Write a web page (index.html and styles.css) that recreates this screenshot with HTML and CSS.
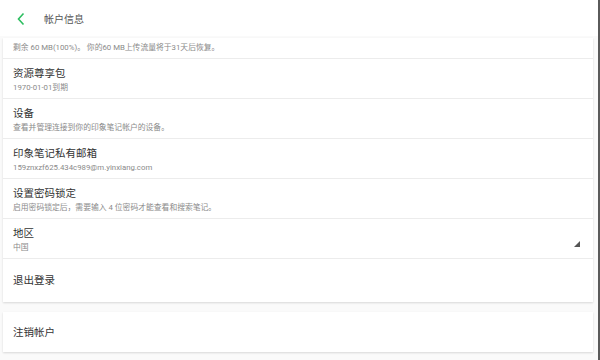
FILE: index.html
```html
<!DOCTYPE html>
<html lang="zh-CN">

    <head>
        <meta charset="UTF-8">
        <meta name="viewport" content="width=device-width, initial-scale=1.0">
        <title>帐户信息</title>
        <link rel="stylesheet" href="styles.css">
    </head>

    <body>
        <div class="screen">
            <header class="topbar">
                <svg class="back" width="10" height="14" viewBox="0 0 10 14">
                    <path d="M7.5 1.5 L2.5 7 L7.5 12.5" fill="none" stroke="#2dbe60" stroke-width="1.6" />
                </svg>
                <span class="topbar-title">帐户信息</span>
            </header>

            <main class="content">
                <section class="card">
                    <div class="row row-quota">
                        <span class="sub">剩余 60 MB(100%)。 你的60 MB上传流量将于31天后恢复。</span>
                    </div>
                    <div class="row">
                        <span class="title">资源尊享包</span>
                        <span class="sub">1970-01-01到期</span>
                    </div>
                    <div class="row">
                        <span class="title">设备</span>
                        <span class="sub">查看并管理连接到你的印象笔记帐户的设备。</span>
                    </div>
                    <div class="row">
                        <span class="title">印象笔记私有邮箱</span>
                        <span class="sub">159znxzf625.434c989@m.yinxiang.com</span>
                    </div>
                    <div class="row">
                        <span class="title">设置密码锁定</span>
                        <span class="sub">启用密码锁定后，需要输入 4 位密码才能查看和搜索笔记。</span>
                    </div>
                    <div class="row row-select">
                        <div class="row-text">
                            <span class="title">地区</span>
                            <span class="sub">中国</span>
                        </div>
                        <span class="dropdown"></span>
                    </div>
                    <div class="row row-single">
                        <span class="title">退出登录</span>
                    </div>
                </section>

                <section class="card">
                    <div class="row row-single">
                        <span class="title">注销帐户</span>
                    </div>
                </section>
            </main>
        </div>
    </body>

</html>
```

FILE: styles.css
```css
html,
body {
    margin: 0;
    padding: 0;
}

* {
    box-sizing: border-box;
}

body {
    font-family: Roboto, "Noto Sans CJK SC", sans-serif;
    background-color: #fafafa;
    width: 600px;
    height: 360px;
    overflow: hidden;
}

.screen {
    height: 360px;
    border-right: 2px solid #5a5a5a;
}

.topbar {
    height: 36px;
    background-color: #fff;
    display: flex;
    align-items: center;
    padding-left: 16px;
}

.back {
    margin-top: 2px;
}

.topbar-title {
    margin-left: 18px;
    font-size: 10px;
    color: #555;
    margin-top: 1px;
}

.content {
    padding: 2px 5px 0 3px;
    display: flex;
    flex-direction: column;
    gap: 10px;
}

.card {
    background-color: #fff;
    box-shadow: 0 1px 2px rgba(0, 0, 0, 0.14);
}

.row {
    height: 40px;
    padding: 3px 10px 0;
    display: flex;
    flex-direction: column;
    justify-content: center;
    gap: 3px;
    border-bottom: 1px solid #ececec;
}

.row:last-child {
    border-bottom: none;
}

.row-quota {
    height: 21px;
    padding-top: 0;
}

.row-single {
    height: 43px;
    padding-top: 0;
}

.card:last-child .row-single {
    height: 40px;
}

.row-select {
    flex-direction: row;
    align-items: center;
    justify-content: space-between;
}

.row-text {
    display: flex;
    flex-direction: column;
    gap: 3px;
}

.title {
    font-size: 10.5px;
    color: #333;
    line-height: 13px;
}

.sub {
    font-size: 7.8px;
    color: #8a8a8a;
    line-height: 10px;
}

.dropdown {
    width: 0;
    height: 0;
    border-left: 6px solid transparent;
    border-bottom: 6px solid #555;
    margin-top: 8px;
    margin-right: 3px;
}
```
